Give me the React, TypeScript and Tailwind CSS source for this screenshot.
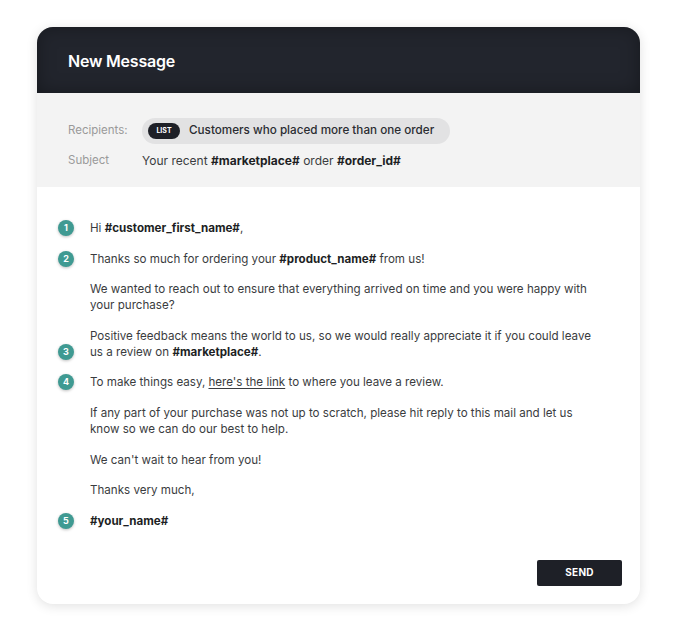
const font = { fontFamily: 'Inter, "Open Sans", sans-serif' }

type Para = { n?: number; align?: 'start' | 'end'; body: React.ReactNode }

const paras: Para[] = [
  { n: 1, body: <>Hi <b className="font-bold text-[#1d1f24]">#customer_first_name#</b>,</> },
  { n: 2, body: <>Thanks so much for ordering your <b className="font-bold text-[#1d1f24]">#product_name#</b> from us!</> },
  { body: <>We wanted to reach out to ensure that everything arrived on time and you were happy with<br />your purchase?</> },
  { n: 3, align: 'end', body: <>Positive feedback means the world to us, so we would really appreciate it if you could leave<br />us a review on <b className="font-bold text-[#1d1f24]">#marketplace#</b>.</> },
  { n: 4, body: <>To make things easy, <span className="underline underline-offset-2">here's the link</span> to where you leave a review.</> },
  { body: <>If any part of your purchase was not up to scratch, please hit reply to this mail and let us<br />know so we can do our best to help.</> },
  { body: <>We can't wait to hear from you!</> },
  { body: <>Thanks very much,</> },
  { n: 5, body: <b className="font-bold text-[#1d1f24]">#your_name#</b> },
]

function Step({ n }: { n: number }) {
  return (
    <span className="flex h-4 w-4 items-center justify-center rounded-full bg-[#3f9a92] text-[9px] font-bold text-white shadow-[0_1px_3px_rgba(0,0,0,0.25)]">
      {n}
    </span>
  )
}

export default function App() {
  return (
    <div className="min-h-[633px] bg-white pl-[37px] pt-[27px]" style={font}>
      <div className="w-[603px] overflow-hidden rounded-[16px] bg-white shadow-[0_2px_12px_rgba(0,0,0,0.12)]">
        <div className="flex h-[66px] items-center bg-[#22252d] px-[31px] pt-[2px] shadow-[inset_0_0_18px_rgba(0,0,0,0.35)]">
          <h1 className="text-[16px] font-semibold tracking-[-0.2px] text-white">New Message</h1>
        </div>

        <div className="h-[94px] bg-[#f3f3f3] px-[31px] pt-[25px] text-[11.5px]">
          <div className="flex items-center">
            <span className="w-[74px] text-[#9a9a9a]">Recipients:</span>
            <div className="flex h-[26px] w-[308px] items-center rounded-full bg-[#e2e2e3] pl-[6px]">
              <span className="flex h-[16px] w-[32px] items-center justify-center rounded-full bg-[#1e2027] text-[7px] font-bold text-white">LIST</span>
              <span className="ml-[9px] text-[11.7px] font-medium text-[#2a2c31]">Customers who placed more than one order</span>
            </div>
          </div>
          <div className="mt-[9px] flex h-[16px] items-center">
            <span className="w-[74px] text-[#9a9a9a]">Subject</span>
            <span className="text-[12px] text-[#3a3c40]">
              Your recent <b className="font-bold text-[#1d1f24]">#marketplace#</b> order <b className="font-bold text-[#1d1f24]">#order_id#</b>
            </span>
          </div>
        </div>

        <div className="pl-[21px] pr-[18px] pt-[33px] pb-[18px]">
          <div className="flex flex-col gap-[14.6px] text-[11.6px] leading-[16px] text-[#3a3c40]">
            {paras.map((p, i) => (
              <div key={i} className={`flex gap-[16px] ${p.align === 'end' ? 'items-end' : 'items-start'}`}>
                <div className="w-4 shrink-0">{p.n && <Step n={p.n} />}</div>
                <p>{p.body}</p>
              </div>
            ))}
          </div>
          <div className="mt-[31px] flex justify-end">
            <button className="h-[26px] w-[85px] rounded-[2px] bg-[#1e2027] text-[10px] font-bold tracking-[0.3px] text-white">
              SEND
            </button>
          </div>
        </div>
      </div>
    </div>
  )
}
